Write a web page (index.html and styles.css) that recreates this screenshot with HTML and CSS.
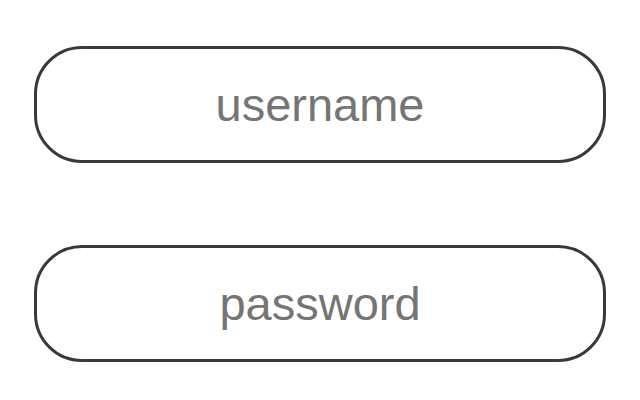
FILE: index.html
```html
<!DOCTYPE html>
<html>
<head>
<meta charset="utf-8">
<link rel="stylesheet" href="styles.css">
</head>
<body>
<form class="login">
  <input class="field" type="text" placeholder="username">
  <input class="field" type="password" placeholder="password">
</form>
</body>
</html>
```
FILE: styles.css
```css
html, body {
  margin: 0;
  padding: 0;
  background: #ffffff;
}
.login {
  display: flex;
  flex-direction: column;
  gap: 82px;
  padding: 46px 0 0 34px;
  width: 572px;
}
.field {
  box-sizing: border-box;
  width: 572px;
  height: 117px;
  border: 3px solid #38383f;
  border-radius: 48px;
  background: #ffffff;
  font-family: "Liberation Sans", Arial, sans-serif;
  font-size: 47px;
  text-align: center;
  color: #757575;
  outline: none;
  padding: 0 20px;
  margin: 0;
}
.field::placeholder {
  color: #757575;
  opacity: 1;
}
```
